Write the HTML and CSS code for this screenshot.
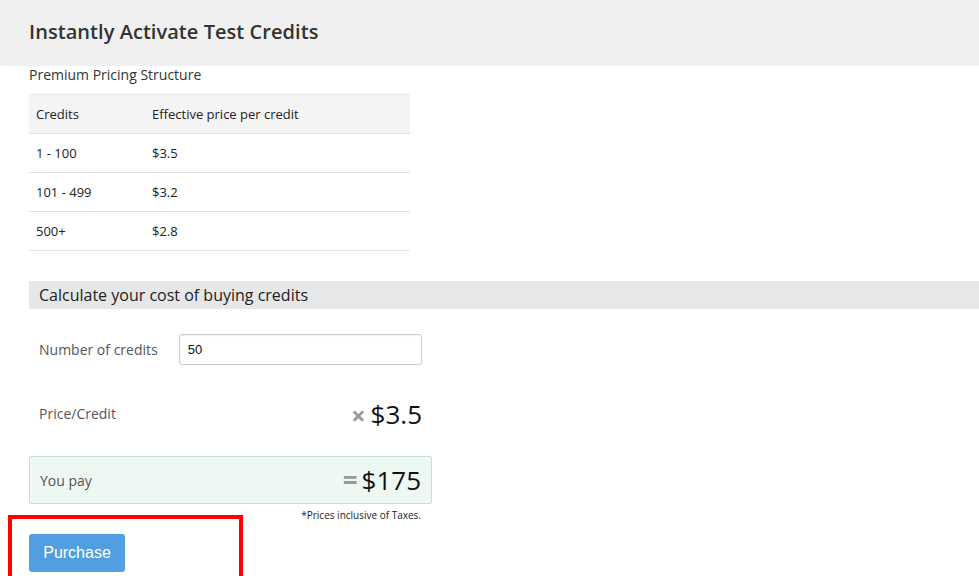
FILE: index.html
```html
<!DOCTYPE html>
<html>
<head>
<meta charset="utf-8">
<link rel="stylesheet" href="styles.css">
</head>
<body>
<header class="page-head">
  <h1 class="title">Instantly Activate Test Credits</h1>
</header>
<main class="content">
  <div class="subtitle">Premium Pricing Structure</div>
  <table class="pricing">
    <thead>
      <tr><th class="col1">Credits</th><th>Effective price per credit</th></tr>
    </thead>
    <tbody>
      <tr><td>1 - 100</td><td>$3.5</td></tr>
      <tr><td>101 - 499</td><td>$3.2</td></tr>
      <tr><td>500+</td><td>$2.8</td></tr>
    </tbody>
  </table>

  <div class="calc-head">Calculate your cost of buying credits</div>

  <div class="calc">
    <div class="calc-row">
      <label class="calc-label" for="credits">Number of credits</label>
      <input id="credits" class="credits-input" type="text" value="50">
    </div>
    <div class="calc-row price-row">
      <span class="calc-label">Price/Credit</span>
      <span class="amount"><span class="op times">×</span><span class="val">$3.5</span></span>
    </div>
    <div class="pay-box">
      <span class="calc-label">You pay</span>
      <span class="amount"><span class="op eq">=</span><span class="val big">$175</span></span>
    </div>
    <div class="note">*Prices inclusive of Taxes.</div>
  </div>

  <div class="actions">
    <button class="purchase">Purchase</button>
  </div>
</main>
<div class="highlight"></div>
</body>
</html>
```

FILE: styles.css
```css
html, body {
  margin: 0;
  padding: 0;
  background: #fff;
  font-family: "Open Sans", "Liberation Sans", sans-serif;
  color: #333;
  overflow: hidden;
  height: 576px;
}
.page-head {
  background: #f0f0f0;
  height: 66px;
  padding: 0 29px;
  display: flex;
  align-items: center;
}
.title {
  margin: 0;
  font-size: 20px;
  font-weight: 600;
  color: #333;
  letter-spacing: 0.05px;
  position: relative;
  top: -2px;
}
.content {
  padding: 0 0 0 29px;
}
.subtitle {
  font-size: 14px;
  color: #333;
  line-height: 18px;
  height: 28px;
}
.pricing {
  width: 381px;
  border-collapse: collapse;
  font-size: 13px;
  color: #222;
}
.pricing th, .pricing td {
  text-align: left;
  font-weight: 400;
  height: 38px;
  padding: 0 7px;
  border-bottom: 1px solid #e2e2e2;
}
.pricing th {
  background: #f4f4f4;
  border-top: 1px solid #e8e8e8;
}
.pricing .col1 { width: 102px; }
.calc-head {
  margin-top: 30px;
  background: #e6e7e9;
  height: 28px;
  line-height: 28px;
  padding-left: 10px;
  font-size: 16px;
  color: #222;
}
.calc {
  width: 403px;
  padding-top: 25px;
}
.calc-row {
  display: flex;
  align-items: center;
  padding: 0 10px;
  width: 383px;
}
.calc-label {
  font-size: 14px;
  color: #555;
}
.credits-input {
  margin-left: 21px;
  width: 243px;
  height: 31px;
  box-sizing: border-box;
  border: 1px solid #ccc;
  border-radius: 3px;
  padding: 0 8px;
  font-family: "Liberation Sans", Arial, sans-serif;
  font-size: 13px;
  color: #111;
  box-shadow: inset 0 1px 1px rgba(0,0,0,0.06);
}
.price-row {
  justify-content: space-between;
  margin-top: 32px;
  height: 34px;
}
.price-row .calc-label { position: relative; top: -1px; }
.amount {
  display: flex;
  align-items: center;
  color: #111;
}
.op {
  color: #999;
  font-weight: 700;
  margin-right: 5px;
}
.times { font-size: 25px; line-height: 1; margin-top: 2px; margin-right: 5px; }
.eq { font-size: 26px; color: #999; margin-right: 4px; }
.val { font-size: 26px; line-height: 1; }
.val.big { font-size: 26px; }
.pay-box {
  margin-top: 25px;
  height: 48px;
  box-sizing: border-box;
  width: 403px;
  background: #eef8f2;
  border: 1px solid #c6e3d0;
  border-radius: 2px;
  display: flex;
  align-items: center;
  justify-content: space-between;
  padding: 0 10px;
}
.note {
  font-size: 10px;
  color: #222;
  text-align: right;
  padding-right: 11px;
  margin-top: 4px;
}
.actions {
  margin-top: 12px;
}
.purchase {
  width: 96px;
  height: 38px;
  background: #519fe0;
  border: none;
  border-radius: 3px;
  color: #fff;
  font-family: "Liberation Sans", Arial, sans-serif;
  font-size: 16px;
  padding: 0;
}
.highlight {
  position: absolute;
  left: 8px;
  top: 515px;
  width: 227px;
  height: 80px;
  border: 4px solid #ff0000;
}
```
